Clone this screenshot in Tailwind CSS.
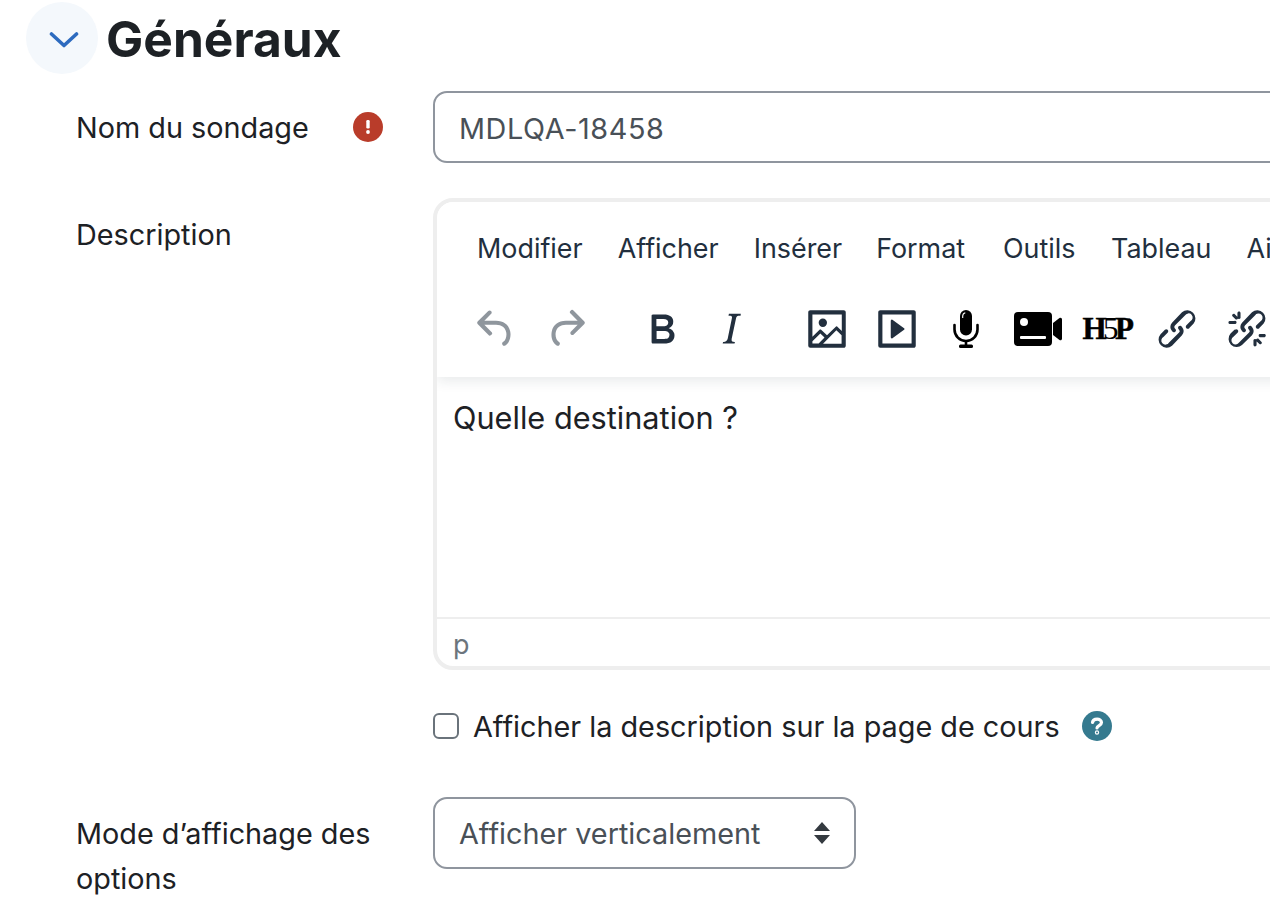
<!DOCTYPE html>
<html lang="fr">
<head>
  <meta charset="UTF-8">
  <title>Généraux</title>
  <script src="https://cdn.jsdelivr.net/npm/@tailwindcss/browser@4"></script>
</head>
<body class="bg-white text-[#1d2125] font-['Inter',sans-serif] text-[28.8px] leading-[45px] w-[1270px] h-[916px] overflow-hidden">

  <!-- Section header -->
  <div class="flex items-center pl-[26px] pt-[2px]">
    <div class="w-[72px] h-[72px] rounded-full bg-[#f4f8fc] flex items-center justify-center shrink-0">
      <svg class="mt-[4px] ml-[4px]" width="30" height="18" viewBox="0 0 30 18" fill="none" stroke="#2d6bbf" stroke-width="3.6" stroke-linecap="round" stroke-linejoin="round"><path d="M2.5 3 15 14.5 27.5 3"/></svg>
    </div>
    <h2 class="ml-[8px] pt-[2px] text-[49.7px] leading-[70px] font-bold">Généraux</h2>
  </div>

  <!-- Nom du sondage -->
  <div class="flex mt-[17px] pl-[76px]">
    <div class="w-[357px] shrink-0 flex items-center h-[72px]">
      <span class="pt-[1px]">Nom du sondage</span>
      <span class="ml-[44px] w-[30px] h-[30px] rounded-full bg-[#b93c2a] text-white flex items-center justify-center">
        <svg width="6" height="16" viewBox="0 0 6 16" fill="#fff"><rect x="1.3" y="1" width="3.4" height="8.5" rx="1.3"/><circle cx="3" cy="13" r="1.9"/></svg>
      </span>
    </div>
    <div class="w-[900px] shrink-0 h-[72px] border-2 border-[#8f959e] rounded-[14px] pl-[24px] pt-[3px] flex items-center text-[#495057] tracking-[0.6px]">MDLQA-18458</div>
  </div>

  <!-- Description -->
  <div class="flex mt-[35px] pl-[76px]">
    <div class="w-[357px] shrink-0 pt-[14px]">Description</div>
    <div class="w-[1000px] shrink-0">
      <div class="h-[472px] border-4 border-[#eeeeee] rounded-[20px] flex flex-col overflow-hidden">
        <div class="h-[175px] shrink-0 bg-white shadow-[0_4px_12px_rgba(34,47,62,0.1)] relative z-10">
          <div class="h-[93px] flex items-center pl-[40px] gap-[35px] text-[#222f3e] text-[26.9px]">
            <span>Modifier</span><span>Afficher</span><span>Insérer</span><span class="-ml-[1px]">Format</span><span class="ml-[3px]">Outils</span><span class="ml-[0.5px]">Tableau</span><span>Aide</span>
          </div>
          <div class="h-[67px] flex items-center pl-[23.5px] text-[#222f3e]">
            <span class="w-[70px] flex justify-center opacity-50"><svg width="50" height="50" viewBox="0 0 24 24" fill="currentColor"><path d="M6.4 8H12c3.7 0 6.2 2 6.8 5.1.6 2.7-.4 5.6-2.3 6.8a1 1 0 0 1-1-1.8c1.1-.6 1.8-2.7 1.4-4.6-.5-2.1-2.1-3.5-4.9-3.5H6.4l3.3 3.3a1 1 0 1 1-1.4 1.4l-5-5a1 1 0 0 1 0-1.4l5-5a1 1 0 0 1 1.4 1.4L6.4 8Z"/></svg></span>
            <span class="w-[70px] flex justify-center opacity-50"><svg width="50" height="50" viewBox="0 0 24 24" fill="currentColor"><path d="M17.6 10H12c-2.8 0-4.4 1.4-4.9 3.5-.4 2 .3 4 1.4 4.6a1 1 0 1 1-1 1.8c-2-1.2-2.9-4.1-2.3-6.8.6-3 3-5.1 6.8-5.1h5.6l-3.3-3.3a1 1 0 1 1 1.4-1.4l5 5a1 1 0 0 1 0 1.4l-5 5a1 1 0 0 1-1.4-1.4l3.3-3.3Z"/></svg></span>
            <span class="w-[69px] ml-[26.5px] flex justify-center"><svg width="50" height="50" viewBox="0 0 24 24" fill="currentColor"><path d="M7.8 19c-.3 0-.5 0-.6-.2l-.2-.5V5.7c0-.2 0-.4.2-.5l.6-.2h5c1.5 0 2.7.3 3.5 1 .7.6 1.1 1.4 1.1 2.5a3 3 0 0 1-.6 1.9c-.4.6-1 1-1.6 1.2.4.1.9.3 1.3.6s.8.7 1 1.2c.4.4.5 1 .5 1.6 0 1.3-.4 2.3-1.3 3-.8.7-2.1 1-3.8 1H7.8Zm5-8.3c.6 0 1.2-.1 1.6-.5.4-.3.6-.7.6-1.3 0-1.1-.8-1.7-2.3-1.7H9.3v3.5h3.4Zm.5 6c.7 0 1.3-.1 1.7-.4.4-.4.6-.9.6-1.5s-.2-1-.7-1.4c-.4-.3-1-.4-2-.4H9.4v3.8h4Z"/></svg></span>
            <span class="w-[69px] flex justify-center"><svg width="50" height="50" viewBox="0 0 24 24" fill="currentColor"><path d="m16.7 4.7-.1.9h-.3c-.6 0-1 0-1.4.3-.3.3-.4.6-.5 1.1l-2.1 9.8v.6c0 .5.4.8 1.4.8h.2l-.2.8H8l.2-.8h.2c1.1 0 1.8-.5 2-1.5l2-9.8.1-.5c0-.6-.4-.8-1.4-.8h-.3l.2-.9h5.8Z"/></svg></span>
            <span class="w-[70px] ml-[27px] flex justify-center"><svg width="50" height="50" viewBox="0 0 24 24" fill="currentColor"><path d="m5 15.7 3.3-3.2c.3-.3.7-.3 1 0L12 15l4.1-4c.3-.4.8-.4 1 0l2 1.9V5H5v10.7ZM5 18V19h3l2.8-2.9-2-2L5 17.9Zm14-3-2.5-2.4-6.4 6.5H19v-4ZM4 3h16c.6 0 1 .4 1 1v16c0 .6-.4 1-1 1H4a1 1 0 0 1-1-1V4c0-.6.4-1 1-1Zm6 8a2 2 0 1 0 0-4 2 2 0 0 0 0 4Z"/></svg></span>
            <span class="w-[70px] flex justify-center"><svg width="50" height="50" viewBox="0 0 24 24" fill="currentColor"><path d="M4 3h16c.6 0 1 .4 1 1v16c0 .6-.4 1-1 1H4a1 1 0 0 1-1-1V4c0-.6.4-1 1-1Zm1 2v14h14V5H5Zm4.8 2.6 5.6 4a.5.5 0 0 1 0 .8l-5.6 4A.5.5 0 0 1 9 16V8a.5.5 0 0 1 .8-.4Z"/></svg></span>
            <!-- microphone -->
            <span class="w-[67px] flex justify-center"><svg width="26" height="38" viewBox="0 0 26 38" fill="#000"><rect x="7" y="0" width="12" height="25.5" rx="6"/><path d="M1.5 15v4.5a11.5 11.5 0 0 0 23 0V15" fill="none" stroke="#000" stroke-width="2.6" stroke-linecap="round"/><rect x="11.7" y="30" width="2.6" height="6"/><rect x="6" y="34.5" width="14" height="3.5" rx="1.5"/><path d="M9.7 8V6a3.5 3.5 0 0 1 2.6-3.3" fill="none" stroke="#fff" stroke-width="1.1"/></svg></span>
            <!-- video -->
            <span class="w-[77px] flex justify-center"><svg width="48" height="34" viewBox="0 0 48 34" fill="#000"><rect x="0" y="0" width="38" height="34" rx="4"/><path d="M39 11 45.5 6c1.2-.8 2.5 0 2.5 1.5v19c0 1.5-1.3 2.3-2.5 1.5L39 23Z"/><circle cx="10" cy="10" r="4" fill="#fff"/><rect x="6" y="24" width="26" height="3" rx="1" fill="#fff"/></svg></span>
            <!-- H5P -->
            <span class="w-[61px] flex justify-center font-['Liberation_Serif',serif] font-bold text-black text-[31px] leading-none tracking-[-3.5px] [-webkit-text-stroke:0.5px_black]"><span>H</span><span class="font-normal [-webkit-text-stroke:0px_black]">5</span><span>P</span></span>
            <span class="w-[80px] flex justify-center"><svg width="50" height="50" viewBox="0 0 24 24" fill="currentColor"><path d="M6.2 12.3a1 1 0 0 1 1.4 1.4l-2 2a2 2 0 1 0 2.6 2.8l4.8-4.8a1 1 0 0 0 0-1.4 1 1 0 1 1 1.4-1.3 2.9 2.9 0 0 1 0 4L9.6 20a3.9 3.9 0 0 1-5.5-5.5l2-2Zm11.6-.6a1 1 0 0 1-1.4-1.4l2-2a2 2 0 1 0-2.6-2.8L11 10.3a1 1 0 0 0 0 1.4A1 1 0 1 1 9.6 13a2.9 2.9 0 0 1 0-4L14.4 4a3.9 3.9 0 0 1 5.5 5.5l-2 2Z"/></svg></span>
            <span class="w-[60px] flex justify-center"><svg width="50" height="50" viewBox="0 0 24 24" fill="currentColor"><path d="M6.2 12.3a1 1 0 0 1 1.4 1.4l-2.1 2a2 2 0 1 0 2.7 2.8l4.8-4.8a1 1 0 0 0 0-1.4 1 1 0 1 1 1.4-1.3 2.9 2.9 0 0 1 0 4l-4.8 4.7a3.9 3.9 0 0 1-5.5-5.5l2-2Zm11.6-.6a1 1 0 0 1-1.4-1.4l2.1-2a2 2 0 1 0-2.7-2.8L11 10.3a1 1 0 0 0 0 1.4A1 1 0 1 1 9.6 13a2.9 2.9 0 0 1 0-4L14.4 4a3.9 3.9 0 0 1 5.5 5.5l-2 2ZM7.6 6.3a.8.8 0 0 1-1 1.1L4.9 5.7a.8.8 0 0 1 1-1l1.7 1.6Zm-4 1.8h2.3a.8.8 0 1 1 0 1.5H3.6a.8.8 0 0 1 0-1.5Zm4.6-4.5c.4 0 .7.3.7.7v2.4a.8.8 0 0 1-1.5 0V4.3c0-.4.4-.7.8-.7Zm8.2 14.1a.8.8 0 0 1 1-1.1l1.7 1.7a.8.8 0 0 1-1 1l-1.7-1.6Zm4-1.8h-2.3a.8.8 0 0 1 0-1.5h2.4a.8.8 0 0 1 0 1.5Zm-4.6 4.5a.8.8 0 0 1-.7-.7v-2.4a.8.8 0 0 1 1.5 0v2.4c0 .4-.4.7-.8.7Z"/></svg></span>
          </div>
        </div>
        <div class="flex-1 pl-[16px] pt-[18px] text-[30.7px] text-[#1d2125]">Quelle destination ?</div>
        <div class="h-[49px] shrink-0 border-t-2 border-[#eeeeee] pl-[16px] pt-[3px] flex items-center text-[#6c757d] text-[26.9px]">p</div>
      </div>
      <div class="flex items-center mt-[41px] h-[30px]">
        <span class="w-[26px] h-[26px] border-2 border-[#6a737b] rounded-[6px] shrink-0"></span>
        <span class="ml-[14px]">Afficher la description sur la page de cours</span>
        <span class="ml-[22px] w-[30px] h-[30px] rounded-full bg-[#357a8f] text-white flex items-center justify-center">
          <svg width="14" height="18" viewBox="0 0 14 18" fill="none" stroke="#fff" stroke-width="3.2" stroke-linecap="round"><path d="M2.5 5.5C3 1 11.5 1 11.5 5.5 11.5 8.5 7 8.5 7 11"/><circle cx="7" cy="15.5" r="0.6"/></svg>
        </span>
      </div>
    </div>
  </div>

  <!-- Mode d'affichage -->
  <div class="flex mt-[56px] pl-[76px]">
    <div class="w-[357px] shrink-0 pt-[14px] pr-[40px]">Mode d’affichage des options</div>
    <div class="w-[423px] h-[72px] border-2 border-[#8f959e] rounded-[14px] pl-[24px] pr-[23px] flex items-center justify-between text-[#495057]">
      <span class="pt-[1px]">Afficher verticalement</span>
      <svg width="18" height="22" viewBox="0 0 18 22" fill="#343a40"><path d="M9 0 17 9H1ZM9 22 1 13H17Z"/></svg>
    </div>
  </div>

</body>
</html>
